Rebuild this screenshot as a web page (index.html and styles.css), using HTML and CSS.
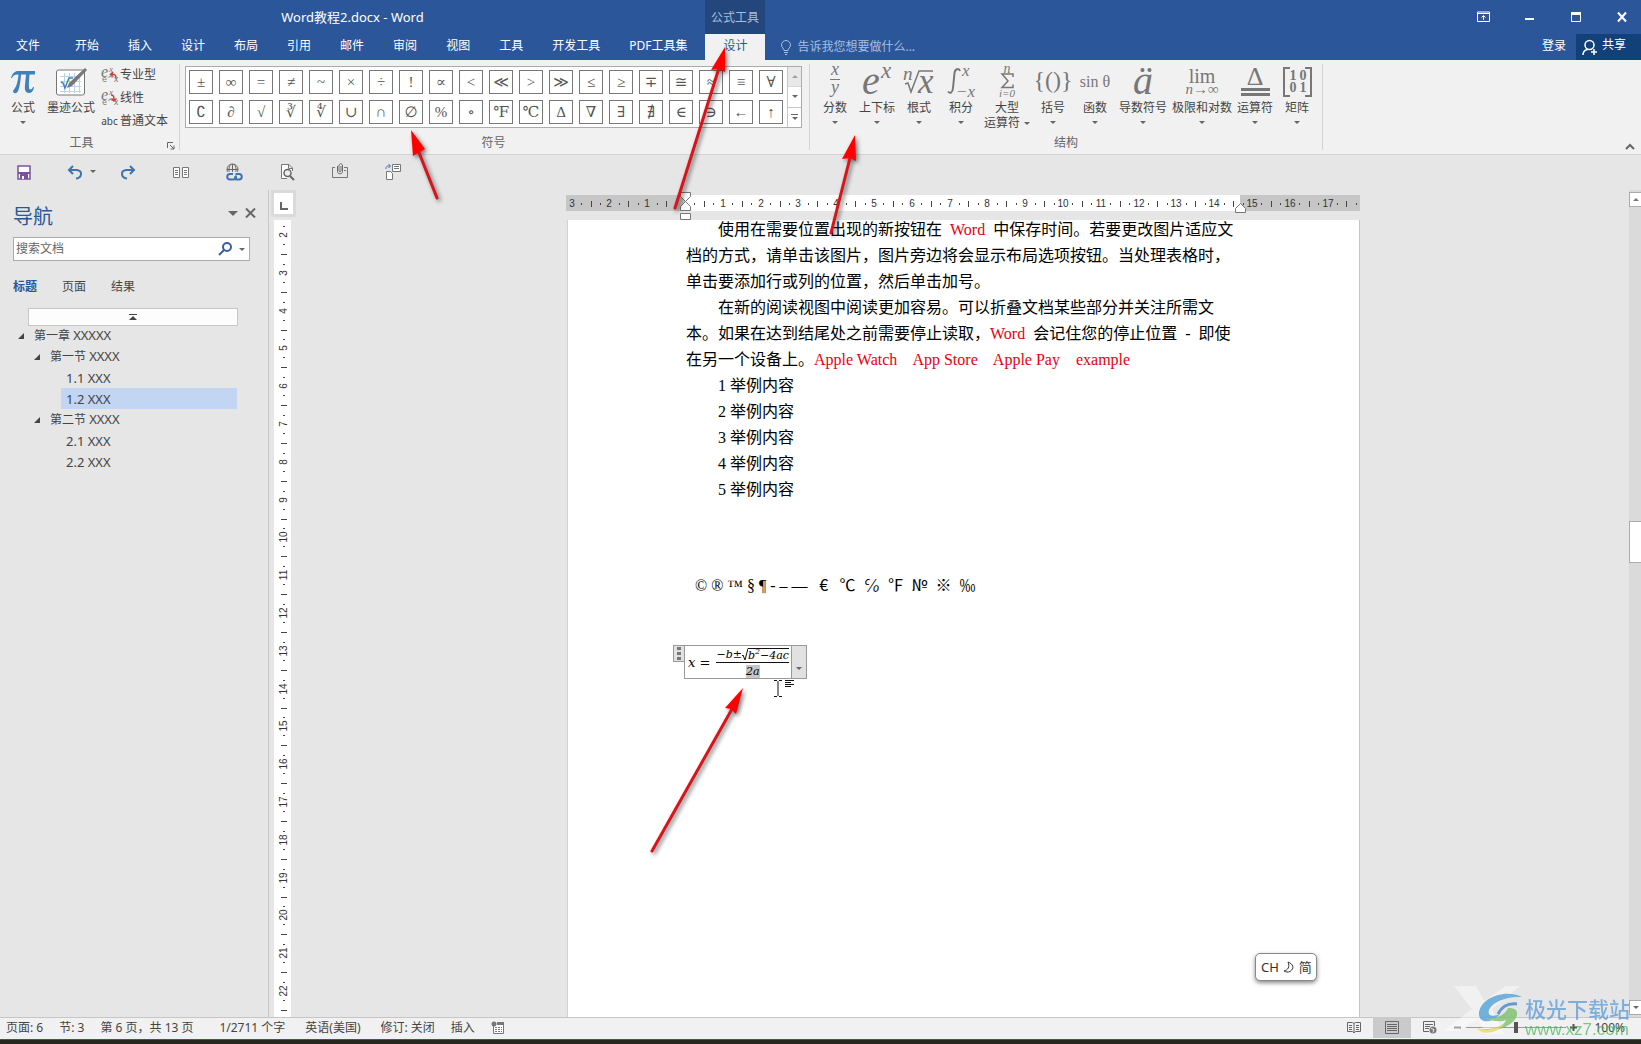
FILE: index.html
```
<!DOCTYPE html>
<html lang="zh-CN">
<head>
<meta charset="utf-8">
<title>Word教程2.docx - Word</title>
<link rel="stylesheet" href="styles.css">
</head>
<body>
<header class="header">
  <div class="titlebar">
    <span class="doc-title">Word教程2.docx - Word</span>
    <span class="context-title">公式工具</span>
    <div class="window-buttons">
      <button aria-label="功能区显示选项"><svg width="14" height="12" viewBox="0 0 14 12"><path d="M.5 1h12v9.500h-12zM.5 2.500h12M6.500 9V4.500M4.500 6.500l2-2 2 2" fill="none" stroke="#fff"/></svg></button>
      <button aria-label="最小化"><svg width="14" height="12" viewBox="0 0 14 12"><path d="M2 7h9v2H2z" fill="#fff"/></svg></button>
      <button aria-label="最大化"><svg width="14" height="12" viewBox="0 0 14 12"><path d="M2.500 1.500h9v9h-9z" fill="none" stroke="#fff"/><path d="M2 1h10v3H2z" fill="#fff"/></svg></button>
      <button aria-label="关闭"><svg width="14" height="12" viewBox="0 0 14 12"><path d="M3 1.500l8 9M11 1.500l-8 9" fill="none" stroke="#fff" stroke-width="2"/></svg></button>
    </div>
  </div>
  <nav class="tabs">
    <button class="tab file-tab">文件</button>
    <button class="tab">开始</button>
    <button class="tab">插入</button>
    <button class="tab">设计</button>
    <button class="tab">布局</button>
    <button class="tab">引用</button>
    <button class="tab">邮件</button>
    <button class="tab">审阅</button>
    <button class="tab">视图</button>
    <button class="tab">工具</button>
    <button class="tab">开发工具</button>
    <button class="tab">PDF工具集</button>
    <button class="tab active">设计</button>
    <button class="tell-me"><svg width="12" height="15" viewBox="0 0 12 15"><path d="M4 10.500C4 8.500 1.500 7.500 1.500 5a4.500 4.500 0 019 0c0 2.500-2.500 3.500-2.500 5.500zM4 12.500h4M5 14.500h2" fill="none" stroke="#a9bede"/></svg>告诉我您想要做什么...</button>
    <button class="login">登录</button>
    <button class="share"><svg width="16" height="17" viewBox="0 0 16 17"><circle cx="7.500" cy="6" r="4.500" fill="none" stroke="#fff" stroke-width="1.500"/><path d="M1 16c0-3 2-5 4.500-5.500M12 10v6M9 13h6" fill="none" stroke="#fff" stroke-width="1.500"/></svg><span>共享</span></button>
  </nav>
</header>

<section class="ribbon">
  <div class="group tools">
    <div class="group-body">
      <button class="big pi"><svg width="26" height="34" viewBox="0 0 26 34"><path d="M1 12C2.500 7 5 5 8 5h17v3.500h-5.500c-.5 6-1 11-.3 14 .3 1.500 2.500 1.500 3.800-1.500h1c-.5 4-2.500 6-5 6-3.500 0-4.500-3-4-8 .3-4 .8-7 1-10.500H11C10.500 16 9.500 22 8 25c-1 2-2.500 2.500-4 2-1.500-.7-1-2.500 0-3.500C7 20 8 14 8.500 8.500 5 8.500 3.500 9 2 12z" fill="#4181b9"/></svg><span>公式</span><i class="caret"></i></button>
      <button class="big ink"><svg width="32" height="34" viewBox="0 0 32 34"><rect x="1.500" y="4" width="28" height="25" rx="2" fill="#fff" stroke="#767676"/><path d="M5 10.500h21M5 15.500h21M5 20.500h21M5 25.500h21M9.500 7v20M14.500 7v20M19.500 7v20M24.500 7v20" stroke="#b9d3ea" fill="none"/><path d="M6 16l2 1 2 5 4-10h4" fill="none" stroke="#4181b9" stroke-width="1.500"/><path d="M30 2l2 2-15 16-5 2 2-5z" fill="#777"/></svg><span>墨迹公式</span></button>
      <div class="small-list">
        <button><svg width="17" height="18" viewBox="0 0 17 18"><g class="math-i"><text x="0" y="11" font-size="16">e</text><text x="8" y="6" font-size="9">x</text></g><text x="1" y="16" class="mini">e^x</text><path d="M15 12c0-4-2-4-5-3.500M12 6L9.500 8.500l3 2" fill="none" stroke="#c8403a" stroke-width="1.500"/></svg>专业型</button>
        <button><svg width="17" height="18" viewBox="0 0 17 18"><g class="math-i"><text x="0" y="11" font-size="16">e</text><text x="8" y="6" font-size="9">x</text></g><text x="1" y="16" class="mini">e^x</text><path d="M10 6c3 0 3 2 3 6M10.500 9.500l2.500 2.500 2.500-2.500" fill="none" stroke="#c8403a" stroke-width="1.500"/></svg>线性</button>
        <button><span class="abc">abc</span>普通文本</button>
      </div>
    </div>
    <div class="group-label">工具</div>
    <svg class="launcher" width="8" height="8" viewBox="0 0 8 8"><path d="M.5 6V.5H6M3 3l4 4M7 3.500V7H3.500" fill="none" stroke="#666"/></svg>
  </div>

  <div class="group symbols">
    <div class="gallery">
      <div class="symbol-grid">
        <button>±</button><button>∞</button><button>=</button><button>≠</button><button>~</button><button>×</button><button>÷</button><button>!</button><button>∝</button><button>&lt;</button><button>≪</button><button>&gt;</button><button>≫</button><button>≤</button><button>≥</button><button>∓</button><button>≅</button><button>≈</button><button>≡</button><button>∀</button>
        <button>∁</button><button>∂</button><button>√</button><button>∛</button><button>∜</button><button>∪</button><button>∩</button><button>∅</button><button>%</button><button>∘</button><button>℉</button><button>℃</button><button>∆</button><button>∇</button><button>∃</button><button>∄</button><button>∈</button><button>∋</button><button>←</button><button>↑</button>
      </div>
      <div class="gallery-scroll">
        <button class="off" aria-label="上一行"><i class="caret up"></i></button>
        <button aria-label="下一行"><i class="caret"></i></button>
        <button aria-label="更多"><i class="bar"></i><i class="caret"></i></button>
      </div>
    </div>
    <div class="group-label">符号</div>
  </div>

  <div class="group structures">
    <div class="group-body">
      <button class="big"><svg width="40" height="34" viewBox="0 0 40 34"><g class="math-i" text-anchor="middle"><text x="20" y="9" font-size="18">x</text><text x="20" y="27" font-size="18">y</text></g><path d="M15 13.500h10" stroke="#777"/></svg><span>分数</span><i class="caret"></i></button>
      <button class="big"><svg width="40" height="34" viewBox="0 0 40 34"><g class="math-i"><text x="5" y="28" font-size="40">e</text><text x="24" y="12" font-size="23">x</text></g></svg><span>上下标</span><i class="caret"></i></button>
      <button class="big"><svg width="40" height="34" viewBox="0 0 40 34"><g class="math-i"><text x="4" y="14" font-size="19">n</text><text x="19" y="27" font-size="35">x</text></g><path d="M6 18l3-1 3 9 8-21h14" fill="none" stroke="#777" stroke-width="1.500"/></svg><span>根式</span><i class="caret"></i></button>
      <button class="big"><svg width="40" height="34" viewBox="0 0 40 34"><path d="M19 5c-1-3-5-2.500-5.500 2L12 22c-.5 5-3 6-5 3.500" fill="none" stroke="#777" stroke-width="2"/><g class="math-i"><text x="21" y="10" font-size="17">x</text><text x="15" y="31" font-size="17">−x</text></g></svg><span>积分</span><i class="caret"></i></button>
      <button class="big wide-50"><svg width="40" height="34" viewBox="0 0 40 34"><g class="math-i" text-anchor="middle"><text x="20" y="7" font-size="14">n</text><text x="20" y="31" font-size="11">i=0</text></g><path d="M26 11v-3H15l6 7-6 6.500h11v-3" fill="none" stroke="#777" stroke-width="1.500"/></svg><span>大型</span><span class="second">运算符<i class="caret"></i></span></button>
      <button class="big"><svg width="40" height="34" viewBox="0 0 40 34"><text x="20" y="22" font-size="24" class="math" text-anchor="middle">{()}</text></svg><span>括号</span><i class="caret"></i></button>
      <button class="big"><svg width="40" height="34" viewBox="0 0 40 34"><text x="20" y="21" font-size="16" class="math" text-anchor="middle">sin θ</text></svg><span>函数</span><i class="caret"></i></button>
      <button class="big wide-54"><svg width="40" height="34" viewBox="0 0 40 34"><text x="20" y="28" font-size="40" class="math-i" text-anchor="middle">ä</text></svg><span>导数符号</span><i class="caret"></i></button>
      <button class="big wide-64"><svg width="40" height="34" viewBox="0 0 40 34"><text x="20" y="17" font-size="20" class="math" text-anchor="middle">lim</text><text x="20" y="28" font-size="15" class="math-i" text-anchor="middle">n→∞</text></svg><span>极限和对数</span><i class="caret"></i></button>
      <button class="big"><svg width="40" height="34" viewBox="0 0 40 34"><text x="20" y="19" font-size="26" class="math" text-anchor="middle">Δ</text><path d="M6 22h29v3H6zM6 27h29v3H6z" fill="#777"/></svg><span>运算符</span><i class="caret"></i></button>
      <button class="big"><svg width="40" height="34" viewBox="0 0 40 34"><path d="M13 2H7v28h6M28 2h6v28h-6" fill="none" stroke="#777" stroke-width="2"/><g class="math bold" font-size="14" text-anchor="middle"><text x="16" y="14">1</text><text x="26" y="14">0</text><text x="16" y="26">0</text><text x="26" y="26">1</text></g></svg><span>矩阵</span><i class="caret"></i></button>
    </div>
    <div class="group-label">结构</div>
  </div>
  <button class="collapse" aria-label="折叠功能区"><svg width="10" height="7" viewBox="0 0 10 7"><path d="M1 6l4-4 4 4" fill="none" stroke="#666" stroke-width="2"/></svg></button>
</section>

<div class="quick-access">
  <button aria-label="保存"><svg width="18" height="18" viewBox="0 0 18 18"><path d="M3 3h12v13H3z" fill="#fff" stroke="#7b52a0" stroke-width="1.500"/><path d="M3 9h12v2H3zM5 11h8v5H5z" fill="#7b52a0"/><path d="M7 13h2v3H7z" fill="#fff"/></svg></button>
  <button aria-label="撤消" class="undo"><svg width="18" height="18" viewBox="0 0 18 18"><path d="M7 3L3 7l4 4M3.500 7H11c6 1 5 8-1 8.500" fill="none" stroke="#3e74b0" stroke-width="2"/></svg><i class="caret"></i></button>
  <button aria-label="恢复"><svg width="18" height="18" viewBox="0 0 18 18"><path d="M11 3l4 4-4 4M14.500 7H7c-6 1-5 8 1 8.500" fill="none" stroke="#3e74b0" stroke-width="2"/></svg></button>
  <button aria-label="并排查看"><svg width="18" height="18" viewBox="0 0 18 18"><path d="M1.500 4.500h6v10h-6zM10.500 4.500h6v10h-6z" fill="#fff" stroke="#777"/><path d="M3 7.500h3M3 9.500h3M3 11.500h3M12 7.500h3M12 9.500h3M12 11.500h3" stroke="#777"/></svg></button>
  <button aria-label="超链接"><svg width="18" height="18" viewBox="0 0 18 18"><circle cx="7.500" cy="6.500" r="5.500" fill="none" stroke="#666"/><path d="M2 6.500h11M7.500 1v9M5 11C3.500 8 3.500 4 6 1M10 11c1.500-3 1.500-7-1-10" fill="none" stroke="#666"/><path d="M1 9h17v9H1z" fill="#e6e6e6"/><path d="M9 14.500h3M8 11h-3a2.500 2.500 0 000 5.500h3.500a2.500 2.500 0 002-4M10.500 16.500H14a2.500 2.500 0 000-5.500h-3.500" fill="none" stroke="#3e74b0" stroke-width="2"/></svg></button>
  <button aria-label="打印预览"><svg width="18" height="18" viewBox="0 0 18 18"><path d="M9 15.500H3.500V1.500H11l3.500 3.500v3M10.500 1.500v4h4" fill="#fff" stroke="#777"/><circle cx="9.500" cy="10" r="3.500" fill="#eee" stroke="#666" stroke-width="1.500"/><path d="M12 13l4 4" stroke="#666" stroke-width="2"/></svg></button>
  <button aria-label="附件"><svg width="18" height="18" viewBox="0 0 18 18"><path d="M4 4.500H1.500v10h15v-10H13M13 7.500h2" fill="none" stroke="#777"/><path d="M6.500 3v5.500c0 3 5 3 5 0V3c0-3-3.500-3-3.500 0v5c0 1 2 1 2 0V3" fill="#eee" stroke="#666"/></svg></button>
  <button aria-label="切换窗口"><svg width="18" height="18" viewBox="0 0 18 18"><path d="M8.500 1.500h8v7h-8zM10 3.500h5M10 5.500h5M2.500 8.500h4l2 2v6h-6z" fill="#fff" stroke="#777"/><path d="M2 6c0-3 1-3 4-3M4.500 1l2 2-2 2" fill="none" stroke="#3e74b0"/></svg></button>
</div>

<main class="workspace">
  <aside class="navigation">
    <div class="nav-head"><h2>导航</h2><i class="caret large"></i><button aria-label="关闭导航"><svg width="11" height="10" viewBox="0 0 11 10"><path d="M1 .5l9 9M10 .5l-9 9" stroke="#666" stroke-width="2"/></svg></button></div>
    <div class="search">
      <input type="text" placeholder="搜索文档" aria-label="搜索文档">
      <svg width="15" height="14" viewBox="0 0 15 14"><circle cx="9" cy="5" r="4" fill="none" stroke="#3e5ba5" stroke-width="2"/><path d="M6 8l-5 5" stroke="#3e5ba5" stroke-width="2"/></svg>
      <i class="caret"></i>
    </div>
    <div class="nav-tabs"><button class="on">标题</button><button>页面</button><button>结果</button></div>
    <button class="jump-top" aria-label="跳转到开头"><svg width="8" height="6" viewBox="0 0 8 6"><path d="M0 0h8v1H0zM4 2l4 4H0z" fill="#444"/></svg></button>
    <ul class="tree">
      <li class="level-1"><i class="fold"></i><span>第一章 <b>XXXXX</b></span></li>
      <li class="level-2"><i class="fold"></i><span>第一节 <b>XXXX</b></span></li>
      <li class="level-3">1.1 XXX</li>
      <li class="level-3 selected">1.2 XXX</li>
      <li class="level-2"><i class="fold"></i><span>第二节 <b>XXXX</b></span></li>
      <li class="level-3">2.1 XXX</li>
      <li class="level-3">2.2 XXX</li>
    </ul>
  </aside>

  <div class="ruler-column">
    <button class="tab-stop" aria-label="制表符"><svg width="8" height="8" viewBox="0 0 8 8"><path d="M1 0v7h7" fill="none" stroke="#666" stroke-width="2"/></svg></button>
    <div class="v-ruler"><svg id="v-ruler" width="17" height="797" viewBox="0 0 17 797"></svg></div>
  </div>

  <div class="canvas">
    <div class="sheet-stack">
      <svg id="h-ruler" class="h-ruler" width="794" height="28" viewBox="0 0 794 28"></svg>
      <article class="page">
        <p class="indent">使用在需要位置出现的新按钮在&nbsp; <em>Word</em>&nbsp; 中保存时间。若要更改图片适应文<br>档的方式，请单击该图片，图片旁边将会显示布局选项按钮。当处理表格时，<br>单击要添加行或列的位置，然后单击加号。</p>
        <p class="indent">在新的阅读视图中阅读更加容易。可以折叠文档某些部分并关注所需文<br>本。如果在达到结尾处之前需要停止读取，<em>Word</em>&nbsp; 会记住您的停止位置&nbsp; -&nbsp; 即使<br>在另一个设备上。<em>Apple Watch&nbsp;&nbsp;&nbsp; App Store&nbsp;&nbsp;&nbsp; Apple Pay&nbsp;&nbsp;&nbsp; example</em></p>
        <p class="indent">1 举例内容</p>
        <p class="indent">2 举例内容</p>
        <p class="indent">3 举例内容</p>
        <p class="indent">4 举例内容</p>
        <p class="indent">5 举例内容</p>
        <p class="special">© ® ™ § ¶ - – —<span class="cjk"><span>€</span><span>℃</span><span>℅</span><span>℉</span><span>№</span><span>※</span><span>‰</span></span></p>
        <div class="equation">
          <i class="grip"></i>
          <div class="formula">
            <span class="lhs">x <b>=</b></span>
            <span class="fraction">
              <span class="numerator">−b<b>±</b><svg width="6" height="13" viewBox="0 0 6 13"><path d="M0 8l1-1 2 5L6 .5" fill="none" stroke="#111"/></svg><span class="radicand">b<sup>2</sup>−4ac</span></span>
              <span class="denominator"><mark>2a</mark></span>
            </span>
          </div>
          <button aria-label="公式选项"><i class="caret"></i></button>
        </div>
      </article>
    </div>
  </div>

  <div class="scrollbar">
    <button aria-label="向上滚动"><i class="caret up"></i></button>
    <div class="track"><div class="thumb"></div></div>
    <button aria-label="向下滚动"><i class="caret"></i></button>
  </div>
</main>

<footer class="status">
  <span>页面: 6</span><span>节: 3</span><span class="page-count">第 6 页，共 13 页</span><span class="spaced">1/2711 个字</span><span class="spaced">英语(美国)</span><span class="spaced">修订: 关闭</span><span>插入</span>
  <svg width="13" height="13" viewBox="0 0 13 13"><path d="M2.500 5v7.500h10V1.500H6" fill="#fff" stroke="#777"/><path d="M6 1h7v3H6z" fill="#777"/><circle cx="3" cy="3" r="2.500" fill="#777"/><path d="M4 6.500h7M4 8.500h7M4 10.500h7" stroke="#777" stroke-dasharray="2 1"/></svg>
  <div class="views">
    <button aria-label="阅读视图"><svg width="14" height="13" viewBox="0 0 14 13"><path d="M7 2.500L5.500 1.500h-5v9h5L7 12l1.500-1.500h5v-9h-5zV12M2 4.500h3M2 6.500h3M2 8.500h3M9 4.500h3M9 6.500h3M9 8.500h3" fill="none" stroke="#666"/></svg></button>
    <button class="on" aria-label="页面视图"><svg width="14" height="13" viewBox="0 0 14 13"><path d="M.5.5h13v12H.5zM2 3.500h10M2 5.500h10M2 7.500h10M2 9.500h10" fill="none" stroke="#666"/></svg></button>
    <button aria-label="Web 版式视图"><svg width="14" height="13" viewBox="0 0 14 13"><path d="M6 10.500H.5V.5h11V5M2 3.500h8M2 5.500h5M2 7.500h4" fill="none" stroke="#666"/><circle cx="10" cy="9" r="3.500" fill="#777"/><path d="M8 7.500l3 1-1 3" fill="none" stroke="#eee"/></svg></button>
  </div>
  <button class="zoom-button" aria-label="缩小"><svg width="7" height="7" viewBox="0 0 7 7"><path d="M0 2.500h7v2H0z" fill="#555"/></svg></button>
  <input class="zoom" type="range" aria-label="缩放" min="10" max="190" value="100">
  <button class="zoom-button" aria-label="放大"><svg width="7" height="7" viewBox="0 0 7 7"><path d="M0 3.500h7M3.500 0v7" stroke="#555" stroke-width="2"/></svg></button>
  <span class="zoom-value">100%</span>
</footer>
<div class="desktop-edge"></div>

<div class="ime">CH <svg width="12" height="12" viewBox="0 0 12 12"><path d="M5 1c5 2 7 6 2 9.500-2 1-4 .5-6-.5 4-1 6-4 4-9z" fill="none" stroke="#333"/></svg> 简</div>

<svg class="cursor" width="21" height="18" viewBox="0 0 21 18"><path d="M0 .5h3M5 .5h3M4 1v15M0 16.500h3M5 16.500h3M11 .5h9M11 2.500h6M11 4.500h9M11 6.500h6" stroke="#111" fill="none"/></svg>

<div class="watermark">
  <svg width="126" height="54" viewBox="0 0 126 54">
    <path d="M10 1h22l8 15L62 1h14L48 24l12 25H42L34 34 12 46H0l28-22z" fill="#fff" opacity=".6"/>
    <path d="M78 12C60 3 34 14 35 30c1 9 14 8 21-1-7 3-13 2-11-4 3-8 18-14 33-13z" fill="#4aa0d8"/>
    <path d="M42 33c9 2 19-3 22-10 8 0 11 3 8 10-5 9-24 16-36 11 14 1 24-3 26-9-5 2-13 2-20-2z" fill="#75bf65"/>
    <path d="M32 42c6 4 18 4 28-3-7 10-23 12-28 3z" fill="#f1d65b"/>
    <path d="M54 29c4-8 10-11 19-10" fill="none" stroke="#3b80c4" stroke-width="3"/>
  </svg>
  <div class="watermark-text"><strong>极光下载站</strong><span>www.xz7.com</span></div>
</div>

<svg class="arrows" width="1641" height="1044" viewBox="0 0 1641 1044">
  <g class="shafts"><path d="M437 198L418 150M675 208L719 68M831 233L850 158M652 851L732 709"/></g>
  <g class="heads"><path d="M411 130l2 26 5-3 7-4zM725 47l-14 23 8-1 6 3zM855 135l-13 24 8-1 6 3zM743 688l-18 20 6 1 5 5z"/></g>
</svg>
<script src="rulers.js"></script>
</body>
</html>
```
FILE: styles.css
```
* { box-sizing: border-box; }
body {
  margin: 0; min-height: 100vh; display: flex; flex-direction: column;
  font: 12px/16px "Noto Sans", "Noto Sans CJK SC", sans-serif;
  color: #444; background: #e6e6e6; position: relative; overflow-x: hidden;
}
button { font: inherit; color: inherit; background: none; border: 0; padding: 0; margin: 0; white-space: nowrap; }
svg { display: block; flex: none; }
svg text { fill: #777; }
.math { font-family: "Liberation Serif", "DejaVu Serif", serif; }
.math-i { font-family: "Liberation Serif", "DejaVu Serif", serif; font-style: italic; }
.bold { font-weight: bold; }
.mini { font: 8px "DejaVu Sans", sans-serif; }
.caret { display: block; width: 0; border: 3px solid transparent; border-top-color: #666; border-bottom: 0; }
.caret.up { border-top: 0; border-bottom: 3px solid #777; }
.caret.large { border-width: 5px 5px 0; }

/* header */
.header { background: #2b579a; color: #fff; }
.titlebar { display: flex; height: 34px; align-items: center; }
.doc-title { width: 705px; text-align: center; font-size: 13px; }
.context-title { width: 60px; height: 34px; line-height: 36px; text-align: center; background: #23477d; color: #a9bede; }
.window-buttons { margin-left: auto; display: flex; gap: 32px; padding-right: 12px; }
.tabs { display: flex; height: 26px; gap: 1px; }
.tab { padding: 0 14px 2px; }
.file-tab { padding: 0 16px 2px; margin-right: 4px; }
.tab.active { width: 60px; margin-left: 3px; background: #f1f1f1; color: #2b579a; }
.tell-me { display: flex; gap: 5px; align-items: center; margin-left: 14px; color: #a9bede; }
.login { margin-left: auto; padding-bottom: 2px; }
.share { display: flex; gap: 4px; align-items: center; width: 65px; margin-left: 9px; padding-left: 6px; background: #124078; }
.share span { padding-bottom: 4px; }

/* ribbon */
.ribbon { display: flex; height: 95px; background: #f1f1f1; border-bottom: 1px solid #d2d2d2; }
.group { position: relative; display: flex; flex-direction: column; justify-content: space-between; margin: 4px 0; border-right: 1px solid #d2d2d2; }
.group-label { text-align: center; color: #666; line-height: 14px; }
.group-body { display: flex; height: 70px; padding-top: 2px; }
.tools { width: 180px; padding-left: 2px; }
.tools .group-label { padding-right: 18px; }
.big { width: 42px; display: flex; flex-direction: column; align-items: center; }
.big .caret { margin-top: 5px; }
.big svg { overflow: visible; }
.second { display: flex; align-items: center; gap: 4px; line-height: 14px; }
.second .caret { margin: 0; }
.wide-50 { width: 50px; }
.wide-54 { width: 54px; }
.wide-64 { width: 64px; }
.ink { width: 54px; }
.small-list { display: flex; flex-direction: column; gap: 5px; margin-left: 3px; }
.small-list button { display: flex; align-items: center; gap: 2px; height: 18px; }
.small-list svg { overflow: visible; }
.abc { width: 17px; font-size: 10px; }
.launcher { position: absolute; right: 4px; bottom: 0; }
.symbols { width: 630px; padding: 2px 7px 0 5px; }
.gallery { display: flex; gap: 4px; padding-left: 3px; background: #fff; border: 1px solid #ababab; height: 62px; }
.symbol-grid { display: grid; grid-template-columns: repeat(20, 24px); gap: 6px; padding: 3px 0; }
.symbol-grid button { height: 24px; border: 1px solid #777; font: 15px/20px "Liberation Serif", "DejaVu Serif", "DejaVu Sans", serif; color: #555; }
.gallery-scroll { flex: 1; display: flex; flex-direction: column; border-left: 1px solid #c6c6c6; }
.gallery-scroll button { flex: 1; display: flex; flex-direction: column; align-items: center; justify-content: center; gap: 2px; border-bottom: 1px solid #c6c6c6; }
.gallery-scroll button:last-child { border: 0; }
.gallery-scroll .off { background: #e1e1e1; opacity: .7; }
.bar { width: 7px; height: 1px; background: #666; }
.structures { padding: 0 4px; }
.collapse { margin: auto 6px 4px auto; }

/* quick access */
.quick-access { display: flex; align-items: center; height: 35px; padding: 0 0 2px 15px; gap: 35px; }
.undo { display: flex; align-items: center; gap: 6px; margin-right: -12px; }
.quick-access button:first-child { margin-right: -2px; }

/* workspace */
.workspace { flex: 1; display: flex; min-height: 827px; }
.navigation { width: 269px; padding: 14px 18px 0 13px; border-right: 1px solid #c6c6c6; }
.nav-head { display: flex; align-items: flex-start; height: 24px; gap: 7px; margin: 0 -6px 9px 0; }
.nav-head h2 { margin: 1px auto 0 0; font-size: 20px; line-height: 24px; font-weight: 400; color: #2b579a; }
.nav-head .caret { margin-top: 7px; }
.nav-head button { padding-top: 4px; }
.search { display: flex; align-items: center; gap: 6px; height: 24px; padding-right: 4px; background: #fff; border: 1px solid #ababab; }
.search input { flex: 1; min-width: 0; border: 0; padding: 0 2px; font: inherit; outline: 0; background: none; }
.search input::placeholder { color: #666; opacity: 1; }
.nav-tabs { display: flex; gap: 25px; margin: 18px 0 13px; }
.nav-tabs .on { color: #2b579a; font-weight: bold; }
.jump-top { display: flex; align-items: center; justify-content: center; width: 210px; height: 18px; margin-left: 15px; background: #fdfdfd; border: 1px solid #c6c6c6; }
.tree { list-style: none; margin: -1px 0 0; padding: 0; }
.tree li { display: flex; align-items: center; gap: 10px; height: 21px; }
.tree b { font-size: 13px; font-weight: 400; }
.fold { border: 3px solid #444; border-top-color: transparent; border-left-color: transparent; }
.level-1 { padding-left: 5px; }
.level-2 { padding-left: 21px; }
.level-3 { padding-left: 5px; margin: 0 0 0 48px; font-size: 13px; }
.selected { background: #c2d5f2; width: 176px; }

.ruler-column { width: 28px; display: flex; flex-direction: column; align-items: flex-start; gap: 3px; padding: 0 0 0 2px; }
.tab-stop { width: 25px; height: 27px; display: flex; align-items: center; justify-content: center; padding-top: 4px; background: #fff; border: 3px solid #dadada; }
.v-ruler { flex: 1; margin-left: 3px; background: #fff; }
.canvas { flex: 1; display: flex; justify-content: center; padding-top: 2px; }
.sheet-stack { display: flex; flex-direction: column; width: 794px; }
.page {
  flex: 1; margin-left: 1px; padding-left: 118px; background: #fff; border-right: 1px solid #c6c6c6; border-left: 1px solid #d2d2d2;
  font: 16px/26px "Liberation Serif", "Noto Sans CJK SC", serif; color: #000; white-space: nowrap;
}
.page p { margin: 0; }
.page p:first-child { margin-top: -3px; }
.indent { text-indent: 32px; }
.page em { font-style: normal; color: #e8000f; }
.page .special { display: flex; align-items: baseline; gap: 8px; margin: 68px 0 48px 9px; height: 26px; }
.cjk { display: flex; gap: 8px; font-family: "Noto Sans CJK SC", sans-serif; }
.cjk span { width: 16px; text-align: center; }
.equation { display: flex; align-items: flex-start; width: 134px; margin-left: -13px; }
.grip { width: 11px; height: 17px; background: #e1e1e1; border: 1px solid #999; border-right: 0; display: flex; align-items: center; justify-content: center; }
.grip::after { content: ""; width: 4px; height: 13px; background: repeating-linear-gradient(#777 0 3px, transparent 3px 5px); }
.formula { display: flex; align-items: center; justify-content: space-between; width: 108px; height: 34px; padding: 2px 2px 0 3px; border: 1px solid #999; font-family: "DejaVu Serif", serif; font-style: italic; line-height: 16px; }
.formula b { font-weight: 400; font-style: normal; }
.lhs { font-size: 13px; }
.fraction { flex: none; display: flex; flex-direction: column; align-items: center; font-size: 11px; line-height: 13px; }
.numerator { display: flex; align-self: stretch; justify-content: center; border-bottom: 1px solid #111; }
.radicand { border-top: 1px solid #111; }
.radicand sup { font-size: 8px; line-height: 0; }
.denominator { padding-top: 2px; }
.fraction mark { background: #c6c6c6; color: inherit; }
.equation button { width: 15px; height: 34px; padding: 12px 4px 0; background: #e1e1e1; border: 1px solid #999; border-left: 0; }

.scrollbar { width: 12px; display: flex; flex-direction: column; padding: 2px 0; background: #dadada; overflow: hidden; }
.scrollbar button { width: 14px; height: 15px; padding-left: 3px; background: #fff; border: 1px solid #ababab; }
.scrollbar .track { flex: 1; padding-top: 314px; }
.thumb { width: 14px; height: 42px; background: #fff; border: 1px solid #ababab; }
.scale-number { font: 10px "Liberation Sans", sans-serif; text-anchor: middle; fill: #333; }

/* status bar */
.status { display: flex; align-items: center; gap: 16px; height: 22px; padding: 0 16px 2px 6px; background: #f1f1f1; border-top: 1px solid #c6c6c6; }
.page-count { width: 98px; }
.spaced { margin-left: 4px; }
.page-count + .spaced { margin-left: 5px; }
.views { display: flex; margin: 0 -11px 0 auto; height: 21px; }
.views button { width: 38px; display: flex; align-items: center; justify-content: center; }
.views .on { background: #cacaca; }
.zoom-button { width: 8px; }
.zoom { appearance: none; width: 100px; height: 14px; margin: 0 -12px; background: linear-gradient(#999, #999) center / 100% 1px no-repeat; }
.zoom::-webkit-slider-thumb { appearance: none; width: 4px; height: 11px; background: #555; }
.desktop-edge { height: 5px; background: #26281f; border-top: 1px solid #2b579a; }

/* layers over the window */
.ime { position: absolute; right: 324px; bottom: 63px; display: flex; align-items: center; gap: 4px; width: 62px; height: 28px; padding-left: 5px; background: #fff; border: 1px solid #888; border-radius: 5px; box-shadow: 0 2px 4px #0007; font-size: 13px; color: #333; white-space: nowrap; }
.cursor { position: absolute; left: 774px; top: 680px; }
.watermark { position: absolute; right: 8px; bottom: 5px; display: flex; align-items: flex-end; pointer-events: none; opacity: .75; }
.watermark svg { margin-right: -45px; }
.watermark-text { display: flex; flex-direction: column; width: 108px; margin-bottom: -2px; }
.watermark strong { font-size: 21px; line-height: 20px; color: #5b9bd8; font-weight: 500; }
.watermark span { font: 17px/22px "Liberation Sans", sans-serif; color: #4db963; }
.arrows { position: absolute; left: 0; top: 0; pointer-events: none; filter: drop-shadow(2px 2px 2px #0008); }
.shafts { fill: none; stroke: #d8141a; stroke-width: 3; stroke-linecap: round; }
.heads { fill: #f00; }
```
FILE: rulers.js
```
// Draws the centimetre scales of the two rulers.
const CM = 37.8;

function horizontalRuler() {
  const zero = 119;
  let out = '<path d="M0 3h794v16H0z" fill="#c6c6c6"/><path d="M120 3h554v16H120z" fill="#fff"/>';
  for (let i = -3; i <= 17; i++) {
    const x = zero + i * CM;
    if (i) out += `<text x="${Math.round(x)}" y="15" class="scale-number">${Math.abs(i)}</text>`;
    for (const part of [0.25, 0.5, 0.75]) {
      const tick = Math.round(x + part * CM);
      out += part === 0.5
        ? `<path d="M${tick} 9h1v6h-1z" fill="#444"/>`
        : `<path d="M${tick} 11h1v2h-1z" fill="#444"/>`;
    }
  }
  out += '<path d="M114.500.5h10v4l-5 5-5-5zM114.500 18.500v-4l5-5 5 5v4zM114.500 21.500h10v6h-10zM669.500 20.500v-4l5-5 5 5v4z" fill="#fff" stroke="#777"/>';
  document.getElementById('h-ruler').innerHTML = out;
}

function verticalRuler() {
  let out = '';
  for (let i = 2; i <= 22; i++) {
    const y = Math.round(15 + (i - 2) * CM);
    out += `<text transform="translate(13 ${y}) rotate(-90)" class="scale-number">${i}</text>`;
    for (const part of [-0.25, 0.25, 0.5]) {
      const tick = Math.round(y + part * CM);
      out += part === 0.5
        ? `<path d="M7 ${tick}h6v1H7z" fill="#444"/>`
        : `<path d="M9 ${tick}h2v1H9z" fill="#444"/>`;
    }
  }
  document.getElementById('v-ruler').innerHTML = out;
}

horizontalRuler();
verticalRuler();
```
